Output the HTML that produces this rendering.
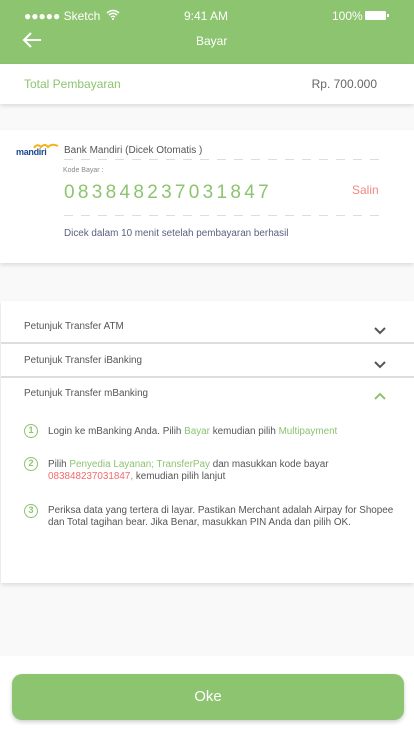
<!DOCTYPE html>
<html><head><meta charset="utf-8"><style>
*{margin:0;padding:0;box-sizing:border-box}
body{width:414px;height:736px;background:#f9f9f9;font-family:"Liberation Sans",sans-serif;position:relative;overflow:hidden}
.abs{position:absolute}
.hdr{left:0;top:0;width:414px;height:64px;background:#8dc470;color:#fff}
.t{white-space:nowrap}
.dash{height:1px;background:repeating-linear-gradient(90deg,#ddd 0 9px,transparent 9px 17px)}
.gr{color:#8dc470}.rd{color:#f26b6b}
.row{left:1px;width:413px;height:1px;background:#ddd}
.step{left:24px;width:14px;height:14px;border:1.5px solid #8dc470;border-radius:50%;color:#8dc470;font-size:9px;font-weight:bold;text-align:center;line-height:11px}
.st{left:48px;font-size:9.9px;color:#555;line-height:12px}
</style></head><body>
<div class="abs hdr">
 <div class="abs t" style="left:24px;top:9px;font-size:12px">●●●●● Sketch</div>
 <svg class="abs" style="left:106px;top:9px" width="14" height="11" viewBox="0 0 14 11"><path d="M1 4Q7-1 13 4M3 6Q7 2.5 11 6M5 8Q7 6.5 9 8" stroke="#fff" stroke-width="1.5" fill="none"/><circle cx="7" cy="10" r="1" fill="#fff"/></svg>
 <div class="abs t" style="left:184px;top:9px;font-size:12px">9:41 AM</div>
 <div class="abs t" style="left:332px;top:9px;font-size:12px">100%</div>
 <div class="abs" style="left:365px;top:11px;width:21px;height:9px;background:#fff;border-radius:1px"></div>
 <div class="abs" style="left:387px;top:14px;width:2px;height:3px;background:#fff"></div>
 <svg class="abs" style="left:22px;top:32px" width="20" height="16" viewBox="0 0 20 16"><path d="M19 8H2M9 1L2 8l7 7" stroke="#fff" stroke-width="2" fill="none"/></svg>
 <div class="abs t" style="left:196px;top:34px;font-size:12px">Bayar</div>
</div>
<div class="abs" style="left:0;top:64px;width:414px;height:40px;background:#fff;box-shadow:0 2px 4px rgba(0,0,0,.12)">
 <div class="abs t gr" style="left:24px;top:13px;font-size:12px">Total Pembayaran</div>
 <div class="abs t" style="right:37px;top:13px;font-size:12px;color:#666">Rp. 700.000</div>
</div>
<div class="abs" style="left:0;top:130px;width:414px;height:133px;background:#fff;box-shadow:0 2px 4px rgba(0,0,0,.12)">
 <svg class="abs" style="left:33px;top:13px" width="26" height="6" viewBox="0 0 26 6"><path d="M1 5Q4 0 8 4Q12 0 15 4Q19 0 25 3" stroke="#f5b21a" stroke-width="2" fill="none"/></svg>
 <div class="abs t" style="left:16px;top:17px;font-size:9px;font-weight:bold;color:#1e4a8c;letter-spacing:-.3px">mandiri</div>
 <div class="abs t" style="left:64px;top:15px;font-size:10px;color:#555">Bank Mandiri (Dicek Otomatis )</div>
 <div class="abs dash" style="left:64px;top:29px;width:316px"></div>
 <div class="abs t" style="left:63px;top:37px;font-size:7px;color:#888">Kode Bayar :</div>
 <div class="abs t gr" style="left:64px;top:52px;font-size:19px;letter-spacing:3.3px">083848237031847</div>
 <div class="abs t" style="left:352px;top:53px;font-size:12px;color:#f08a80">Salin</div>
 <div class="abs dash" style="left:64px;top:85px;width:316px"></div>
 <div class="abs t" style="left:64px;top:98px;font-size:9.9px;color:#5a6080">Dicek dalam 10 menit setelah pembayaran berhasil</div>
</div>
<div class="abs" style="left:1px;top:301px;width:413px;height:282px;background:#fff;box-shadow:0 2px 4px rgba(0,0,0,.12)">
 <div class="abs t" style="left:23px;top:20px;font-size:9.9px;color:#555">Petunjuk Transfer ATM</div>
 <div class="abs t" style="left:23px;top:54px;font-size:9.9px;color:#555">Petunjuk Transfer iBanking</div>
 <div class="abs t" style="left:23px;top:87px;font-size:9.9px;color:#555">Petunjuk Transfer mBanking</div>
 <svg class="abs" style="left:372px;top:25px" width="14" height="9"><path d="M2 2l5 5 5-5" stroke="#555" stroke-width="2" fill="none"/></svg>
 <svg class="abs" style="left:372px;top:59px" width="14" height="9"><path d="M2 2l5 5 5-5" stroke="#555" stroke-width="2" fill="none"/></svg>
 <svg class="abs" style="left:372px;top:91px" width="14" height="9"><path d="M2 7l5-5 5 5" stroke="#8dc470" stroke-width="2" fill="none"/></svg>
</div>
<div class="abs row" style="top:342px;height:2px"></div>
<div class="abs row" style="top:376px;height:2px"></div>
<div class="abs step" style="top:424px">1</div>
<div class="abs st t" style="top:426px">Login ke mBanking Anda. Pilih <span class="gr">Bayar</span> kemudian pilih <span class="gr">Multipayment</span></div>
<div class="abs step" style="top:457px">2</div>
<div class="abs st t" style="top:459px">Pilih <span class="gr">Penyedia Layanan; TransferPay</span> dan masukkan kode bayar<br><span class="rd">083848237031847,</span> kemudian pilih lanjut</div>
<div class="abs step" style="top:504px">3</div>
<div class="abs st t" style="top:505px">Periksa data yang tertera di layar. Pastikan Merchant adalah Airpay for Shopee<br>dan Total tagihan bear. Jika Benar, masukkan PIN Anda dan pilih OK.</div>
<div class="abs" style="left:0;top:656px;width:414px;height:80px;background:#fff"></div>
<div class="abs" style="left:12px;top:674px;width:392px;height:46px;background:#8dc470;border-radius:10px;box-shadow:0 2px 4px rgba(0,0,0,.2);color:#fff;font-size:15px;text-align:center;line-height:46px">Oke</div>
</body></html>
